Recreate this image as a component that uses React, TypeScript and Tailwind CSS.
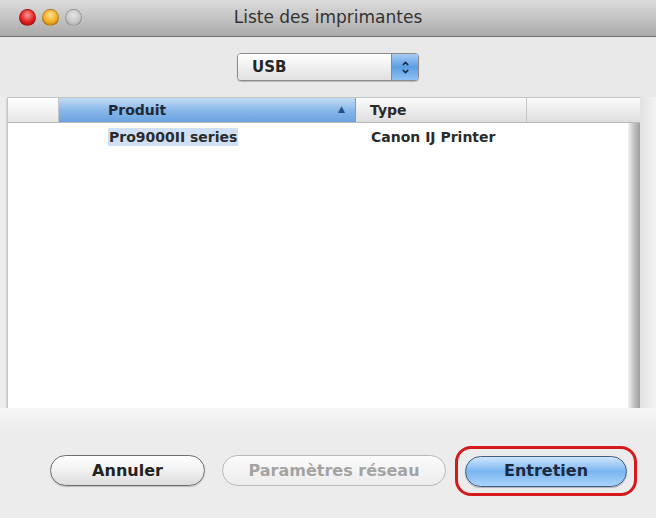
import { ChevronUp, ChevronDown } from 'lucide-react';

const font = { fontFamily: '"DejaVu Sans", "Liberation Sans", sans-serif' };

function Light({ className }: { className: string }) {
    return <div className={`w-[17px] h-[17px] rounded-full border border-black/20 ${className}`}></div>;
}

export default function App() {
    return (
        <div className="w-[656px] h-[518px] bg-[#ececec] flex flex-col overflow-hidden" style={font}>
            {/* Title bar */}
            <div className="relative h-[37px] shrink-0 flex items-center justify-center bg-gradient-to-b from-[#dcdcdc] via-[#c4c4c4] to-[#a9a9a9] border-b border-[#6f6f6f]">
                <div className="absolute left-[19px] top-[9px] flex gap-[6px]">
                    <Light className="bg-[radial-gradient(circle_at_50%_35%,#ff9a9a,#e0201f_55%,#9b0d0d)]" />
                    <Light className="bg-[radial-gradient(circle_at_50%_35%,#ffe39a,#f2ad22_55%,#b66f08)]" />
                    <Light className="bg-[radial-gradient(circle_at_50%_35%,#e6e6e6,#c8c8c8_55%,#a6a6a6)] border-black/10" />
                </div>
                <span className="text-[17px] text-[#333]">Liste des imprimantes</span>
            </div>

            {/* Popup */}
            <div className="h-[60px] shrink-0 flex items-center justify-center bg-[#e9e9e9]">
                <div className="w-[182px] h-[28px] rounded-[4px] border border-[#8a8a8a] flex overflow-hidden shadow-[0_1px_1px_rgba(0,0,0,0.2)]">
                    <div className="flex-1 flex items-center pl-[14px] bg-gradient-to-b from-[#ffffff] via-[#f0f0f0] to-[#e0e0e0]">
                        <span className="text-[15px] font-bold text-[#262626]">USB</span>
                    </div>
                    <div className="w-[27px] flex flex-col items-center justify-center bg-gradient-to-b from-[#a9cdf3] via-[#5b9de3] to-[#8fc1f2] border-l border-[#6d8fb5] text-[#1a2a40]">
                        <ChevronUp size={9} strokeWidth={4} className="-mb-[1px]" />
                        <ChevronDown size={9} strokeWidth={4} />
                    </div>
                </div>
            </div>

            {/* Table */}
            <div className="flex h-[311px] shrink-0">
                <div className="ml-[7px] w-[633px] bg-white border-l border-t border-[#c4c4c4] flex flex-col shadow-[0_2px_2px_rgba(0,0,0,0.25)]">
                    <div className="h-[25px] flex text-[14px] font-bold border-b border-[#b8b8b8]">
                        <div className="w-[51px] bg-gradient-to-b from-[#ffffff] to-[#e6e6e6] border-r border-[#c4c4c4]"></div>
                        <div className="w-[297px] flex items-center justify-between pl-[49px] pr-[10px] bg-gradient-to-b from-[#c4dcf5] via-[#8ab8ea] to-[#6aa2e0] border-r border-[#7a9cc4] text-[#1f2a38]">
                            <span>Produit</span>
                            <span className="text-[9px] text-[#24508a]">▲</span>
                        </div>
                        <div className="w-[171px] flex items-center pl-[14px] bg-gradient-to-b from-[#fbfbfb] to-[#dedede] border-r border-[#c4c4c4] text-[#2a2a2a]">
                            <span>Type</span>
                        </div>
                        <div className="flex-1 bg-gradient-to-b from-[#fbfbfb] to-[#dedede]"></div>
                    </div>
                    <div className="flex-1 flex">
                        <div className="flex-1 pt-[4px]">
                            <div className="h-[20px] flex items-center text-[14px] font-bold text-[#2b2b2b]">
                                <div className="w-[100px]"></div>
                                <div className="w-[249px]">
                                    <span className="bg-[#cfe0f4] px-[1px] py-[1px]">Pro9000II series</span>
                                </div>
                                <span className="pl-[14px]">Canon IJ Printer</span>
                            </div>
                        </div>
                        <div className="w-[12px] bg-gradient-to-r from-[#f2f2f2] via-[#c2c2c2] to-[#9e9e9e]"></div>
                    </div>
                </div>
                <div className="flex-1 bg-gradient-to-r from-[#e2e2e2] to-[#f4f4f4]"></div>
            </div>
            <div className="h-[22px] shrink-0 bg-gradient-to-b from-[#f6f6f6] to-[#ececec]"></div>

            {/* Buttons */}
            <div className="flex-1 flex items-start pt-[25px] pl-[50px] gap-[17px]">
                <button className="w-[155px] h-[31px] rounded-full border border-[#6e6e6e] bg-gradient-to-b from-[#ffffff] via-[#f1f1f1] to-[#dcdcdc] text-[16px] font-bold text-[#222] shadow-[0_1px_1px_rgba(0,0,0,0.2)]">
                    Annuler
                </button>
                <button className="w-[224px] h-[31px] rounded-full border border-[#b9b9b9] bg-gradient-to-b from-[#fbfbfb] to-[#ececec] text-[16px] font-bold text-[#a3a3a3]">
                    Paramètres réseau
                </button>
                <div className="-mt-[9px] -ml-[8px] w-[182px] h-[50px] rounded-[16px] border-[3px] border-[#d41a1a] flex items-center justify-center">
                    <button className="w-[162px] h-[31px] rounded-full border border-[#3d5f86] bg-gradient-to-b from-[#cfe5fb] via-[#7bb6f0] to-[#a9d3fa] text-[16px] font-bold text-[#1a2a44] shadow-[0_1px_1px_rgba(0,0,0,0.25)]">
                        Entretien
                    </button>
                </div>
            </div>
        </div>
    );
}
